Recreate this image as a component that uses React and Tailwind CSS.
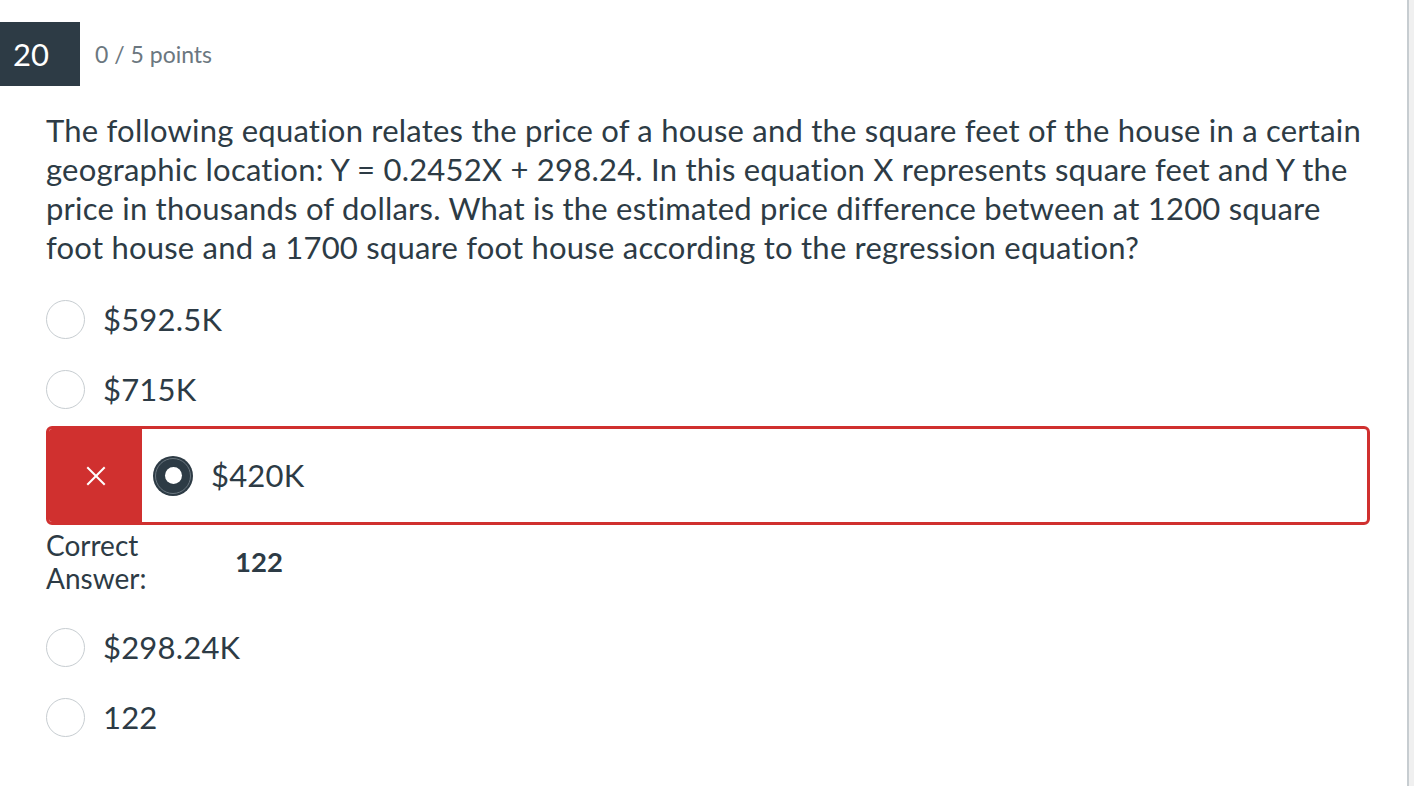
export default function App() {
  const options = [
    { label: "$592.5K" },
    { label: "$715K" },
  ]
  const rest = [{ label: "$298.24K" }, { label: "122" }]

  const Radio = () => (
    <div className="w-[39px] h-[39px] rounded-full border-[1.5px] border-[#c7cdd1] bg-white shrink-0" />
  )

  return (
    <div className="w-[1414px] h-[786px] bg-white flex overflow-hidden"
      style={{ fontFamily: "Lato, 'Noto Sans', sans-serif" }}>
      <div className="w-[1409px] h-full border-r-2 border-[#c7cdd1] shrink-0">
        {/* Header */}
        <div className="flex items-center mt-[22px] h-[64px]">
          <div className="w-[80px] h-full bg-[#2d3b45] text-white text-[31px] flex items-center pl-[13px]">
            20
          </div>
          <div className="ml-[15px] text-[23px] text-[#6b7780]">0 / 5 points</div>
        </div>

        <div className="pl-[46px] pr-[40px] text-[#2d3b45]">
          {/* Question */}
          <p className="mt-[25px] text-[31px] leading-[39px] tracking-[0.22px]">
            The following equation relates the price of a house and the square feet of the house in a certain geographic location: Y = 0.2452X + 298.24. In this equation X represents square feet and Y the price in thousands of dollars. What is the estimated price difference between at 1200 square foot house and a 1700 square foot house according to the regression equation?
          </p>

          {/* Options */}
          <div className="mt-[17px]">
            {options.map((o) => (
              <div key={o.label} className="h-[70px] flex items-center gap-[18px]">
                <Radio />
                <span className="text-[31px] tracking-[0.2px]">{o.label}</span>
              </div>
            ))}
          </div>

          {/* Wrong answer */}
          <div className="mt-[2px] -mr-[3px] h-[99px] flex rounded-[6px] border-[3px] border-[#d0302f] overflow-hidden">
            <div className="w-[93px] bg-[#d0302f] flex items-center justify-center">
              <svg width="22" height="22" viewBox="0 0 22 22" fill="none"
                stroke="white" strokeWidth="2" strokeLinecap="square">
                <line x1="3" y1="3" x2="19" y2="19" />
                <line x1="19" y1="3" x2="3" y2="19" />
              </svg>
            </div>
            <div className="flex items-center pl-[11px] gap-[18px]">
              <div className="w-[40px] h-[40px] rounded-full bg-[#2d3b45] flex items-center justify-center shrink-0">
                <div className="w-[36px] h-[36px] rounded-full border border-[#6b7780] flex items-center justify-center">
                  <div className="w-[17px] h-[17px] rounded-full bg-white" />
                </div>
              </div>
              <span className="text-[31px] tracking-[0.2px]">$420K</span>
            </div>
          </div>

          {/* Correct answer */}
          <div className="mt-[4px] flex items-center">
            <div className="w-[189px] text-[28px] leading-[33px]">
              Correct<br />Answer:
            </div>
            <div className="text-[27.5px] font-bold">122</div>
          </div>

          <div className="mt-[17px]">
            {rest.map((o) => (
              <div key={o.label} className="h-[70px] flex items-center gap-[18px]">
                <Radio />
                <span className="text-[31px] tracking-[0.2px]">{o.label}</span>
              </div>
            ))}
          </div>
        </div>
      </div>
      <div className="flex-1 bg-[#f0f0f0]" />
    </div>
  )
}
